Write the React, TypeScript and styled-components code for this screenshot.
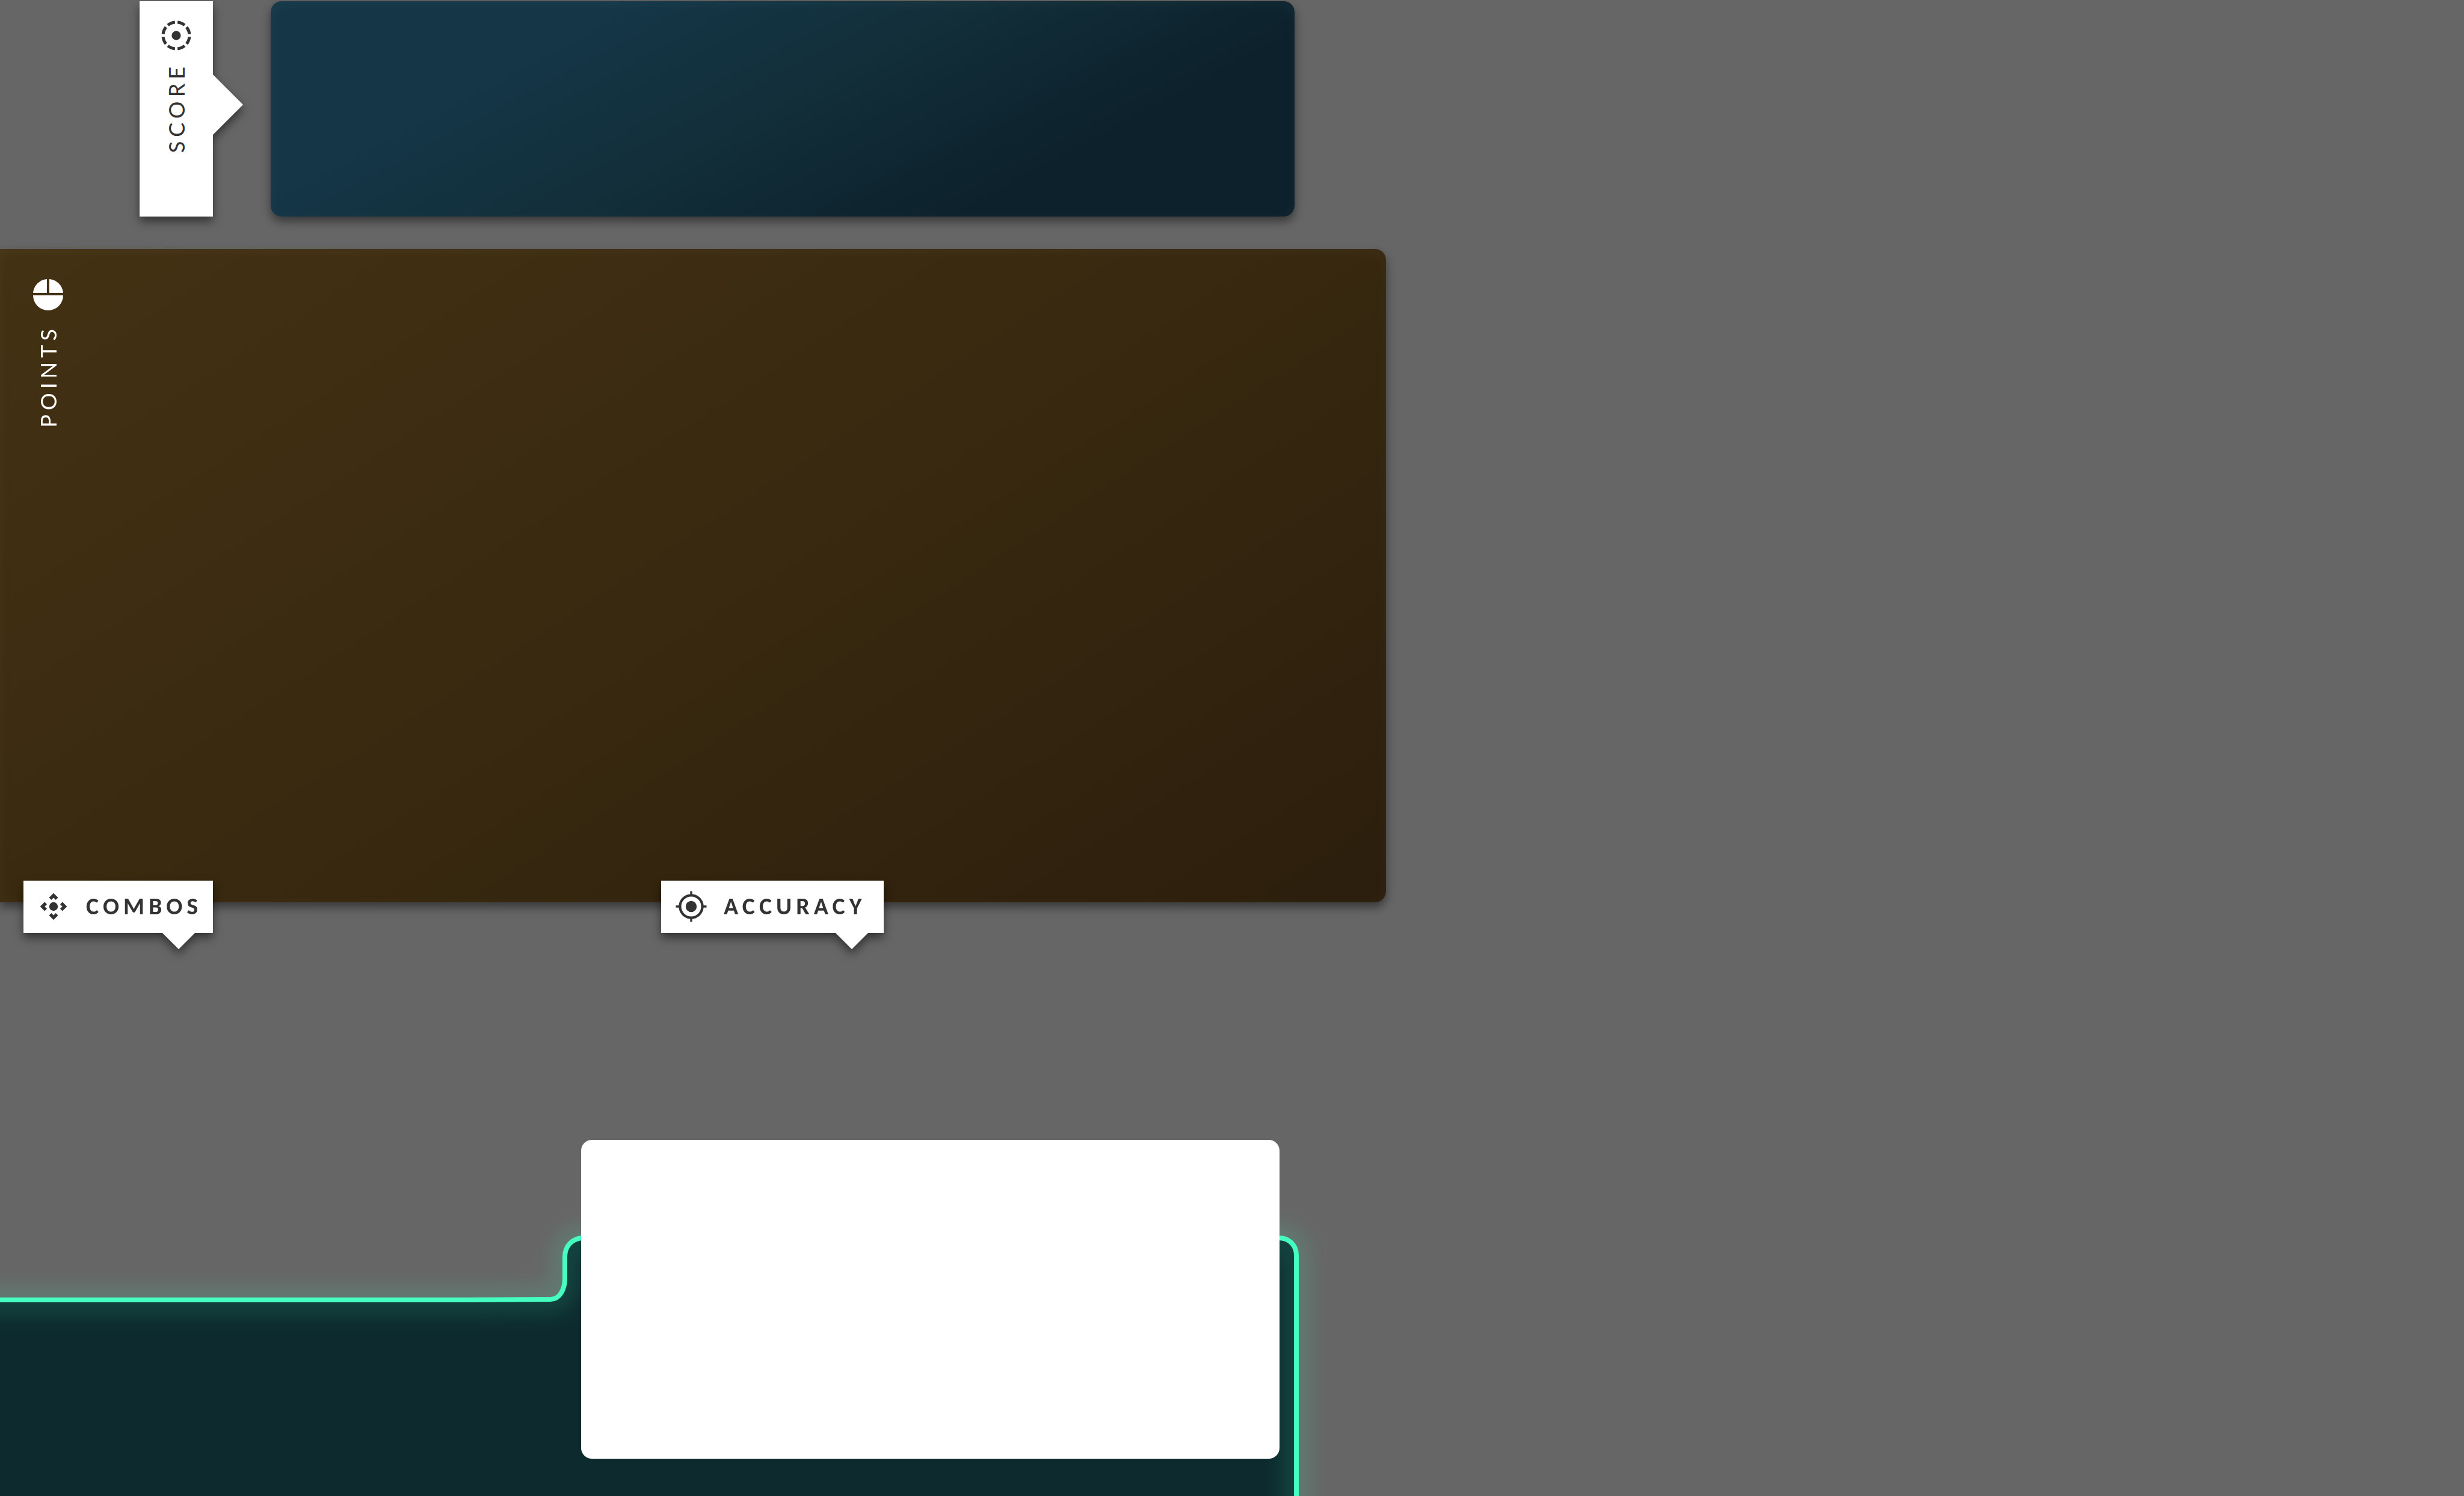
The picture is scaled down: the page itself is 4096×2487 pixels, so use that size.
import React from "react";
import styled, { createGlobalStyle } from "styled-components";

const ink = "#333333";

const GlobalStyle = createGlobalStyle`
  *, *::before, *::after { box-sizing: border-box; }
  html, body { margin: 0; background: #666666; }
  body { font-family: Lato, "Liberation Sans", sans-serif; color: ${ink}; }
`;

const Page = styled.main`
  min-height: 100vh;
  overflow: hidden;
  background: #666666;
`;

const Board = styled.div`
  display: flex;
  flex-direction: column;
  width: 56.25%;
`;

const ScoreRow = styled.section`
  display: flex;
  gap: 96px;
  padding: 2px 152px 0 232px;
`;

const ScoreTag = styled.div`
  position: relative;
  display: flex;
  flex-direction: column;
  align-items: center;
  gap: 18px;
  width: 122px;
  min-height: 358px;
  padding-top: 30px;
  background: #ffffff;
  filter: drop-shadow(0 8px 8px rgba(0, 0, 0, 0.5));

  &::after {
    content: "";
    position: absolute;
    left: 100%;
    top: 122px;
    border: 50px solid transparent;
    border-left-color: #ffffff;
    border-right-width: 0;
  }
`;

const SideLabel = styled.h2`
  margin: 0;
  font-size: 36px;
  line-height: 44px;
  font-weight: 400;
  letter-spacing: 7px;
  writing-mode: vertical-rl;
  transform: rotate(180deg);
`;

const Card = styled.div`
  box-shadow: 0 8px 16px rgba(0, 0, 0, 0.45),
    inset 0 4px 24px rgba(255, 255, 255, 0.04);
`;

const ScoreCard = styled(Card)`
  flex: 1;
  border-radius: 18px;
  background: linear-gradient(152deg, #143647 24%, #122f3a 48%, #0c212b 76%);
`;

const PointsCard = styled(Card)`
  min-height: 1086px;
  margin-top: 54px;
  padding: 48px 53px;
  border-radius: 0 18px 18px 0;
  color: #ffffff;
  background: linear-gradient(147deg, #433113, #37280f 55%, #2b1e0c);
`;

const PointsHeading = styled.div`
  display: flex;
  flex-direction: column;
  align-items: center;
  gap: 24px;
  width: 54px;
`;

const TagRow = styled.div`
  position: relative;
  display: grid;
  grid-template-columns: 1060px auto;
  justify-content: start;
  justify-items: start;
  margin-top: -36px;
  padding-left: 39px;
`;

const Tag = styled.h3<{ $arrow: number; $end: number }>`
  position: relative;
  display: flex;
  align-items: center;
  gap: 27px;
  margin: 0;
  height: 87px;
  padding: 0 ${(p) => p.$end}px 2px 23px;
  font-family: Carlito, Lato, "Liberation Sans", sans-serif;
  font-size: 40px;
  line-height: 44px;
  font-weight: 700;
  letter-spacing: 7px;
  background: #ffffff;
  filter: drop-shadow(0 8px 8px rgba(0, 0, 0, 0.5));

  &::after {
    content: "";
    position: absolute;
    top: 100%;
    right: ${(p) => p.$arrow}px;
    border: 27px solid transparent;
    border-top-color: #ffffff;
    border-bottom-width: 0;
  }
`;

const Dock = styled.section`
  position: relative;
  margin-top: 344px;
  padding: 0 177px 62px 966px;
`;

const DockOutline = styled.svg`
  position: absolute;
  left: 0;
  top: 0;
  width: 2304px;
  height: 700px;
  overflow: visible;
`;

const DockCard = styled.div`
  position: relative;
  min-height: 530px;
  border-radius: 18px;
  background: #ffffff;
`;

const Icon = styled.svg`
  display: block;
  flex: none;
  width: 54px;
  height: 54px;
`;

const ScoreIcon = () => (
  <Icon viewBox="-27 -27 54 54" aria-hidden="true">
    <circle r="22" fill="none" stroke={ink} strokeWidth="5" pathLength={80} strokeDasharray="7.4 2.6" strokeDashoffset="-1.3" />
    <circle r="7.6" fill={ink} />
  </Icon>
);

const PointsIcon = () => (
  <Icon viewBox="-27 -27 54 54" aria-hidden="true" fill="#ffffff">
    <path d="M-2 -2H-25A25 25 0 0 1 -2 -25Z" />
    <path d="M2 -2H25A25 25 0 0 0 2 -25Z" />
    <path d="M-25 2H25A25 25 0 0 1 -25 2Z" />
  </Icon>
);

const CombosIcon = () => (
  <Icon viewBox="-27 -27 54 54" aria-hidden="true">
    <circle r="7.2" fill={ink} />
    {[0, 90, 180, 270].map((a) => (
      <path key={a} d="M-5.6 -12.9L0 -18.5L5.6 -12.9" fill="none" stroke={ink} strokeWidth="5.4" transform={`rotate(${a})`} />
    ))}
  </Icon>
);

const AccuracyIcon = () => (
  <Icon viewBox="-27 -27 54 54" aria-hidden="true">
    <circle r="18.6" fill="none" stroke={ink} strokeWidth="4.2" />
    <circle r="9.2" fill={ink} />
    <path d="M0 -25.5V-19M0 25.5V19M-25.5 0H-19M25.5 0H19" stroke={ink} strokeWidth="3.4" />
  </Icon>
);

const outline =
  "M-80 266H780L915 265C931 265 939 248 939 230V194C939 176 952 163 970 163H2126C2143 163 2155 175 2155 192V760H-80Z";

export default function App() {
  return (
    <>
      <GlobalStyle />
      <Page>
        <Board>
          <ScoreRow>
            <ScoreTag>
              <ScoreIcon />
              <SideLabel>SCORE</SideLabel>
            </ScoreTag>
            <ScoreCard />
          </ScoreRow>
          <PointsCard>
            <PointsHeading>
              <PointsIcon />
              <SideLabel>POINTS</SideLabel>
            </PointsHeading>
          </PointsCard>
          <TagRow>
            <Tag $arrow={30} $end={18}>
              <CombosIcon />
              COMBOS
            </Tag>
            <Tag $arrow={26} $end={30}>
              <AccuracyIcon />
              ACCURACY
            </Tag>
          </TagRow>
          <Dock>
            <DockOutline aria-hidden="true">
              <defs>
                <filter id="glow" filterUnits="userSpaceOnUse" x="-100" y="40" width="2400" height="760">
                  <feGaussianBlur stdDeviation="17" />
                </filter>
              </defs>
              <path d={outline} fill="#0d2b2e" />
              <path d={outline} fill="none" stroke="#45ffc0" strokeWidth="44" opacity="0.13" filter="url(#glow)" />
              <path d={outline} fill="none" stroke="#45ffc0" strokeWidth="8" />
            </DockOutline>
            <DockCard />
          </Dock>
        </Board>
      </Page>
    </>
  );
}
